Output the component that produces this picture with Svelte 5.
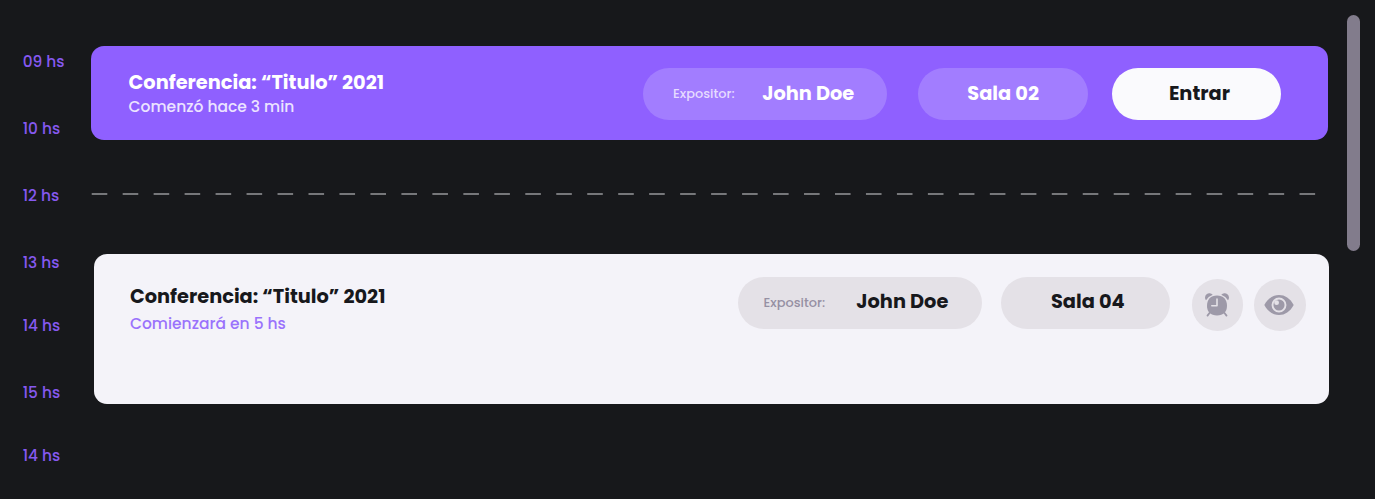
<script>
  const hours = [
    { label: '09 hs', gap: 47 },
    { label: '10 hs', gap: 47 },
    { label: '12 hs', gap: 47 },
    { label: '13 hs', gap: 43 },
    { label: '14 hs', gap: 47 },
    { label: '15 hs', gap: 43 },
    { label: '14 hs', gap: 0 }
  ];
</script>

<main class="agenda">
  <ul class="hours">
    {#each hours as hour, i (i)}
      <li style:margin-bottom="{hour.gap}px">{hour.label}</li>
    {/each}
  </ul>

  <section class="timeline">
    <article class="card live">
      <div class="info">
        <h2>Conferencia: “Titulo” 2021</h2>
        <p>Comenzó hace 3 min</p>
      </div>
      <div class="pill speaker"><small>Expositor:</small><b>John Doe</b></div>
      <div class="pill room"><b>Sala 02</b></div>
      <button class="pill enter"><b>Entrar</b></button>
    </article>

    <svg class="divider" width="1236" height="4" aria-hidden="true">
      <line x1="0.700" y1="2" x2="1226" y2="2" stroke="#96969a" stroke-width="1.6" stroke-dasharray="15.6 15.37" />
    </svg>

    <article class="card upcoming">
      <div class="info">
        <h2>Conferencia: “Titulo” 2021</h2>
        <p>Comienzará en 5 hs</p>
      </div>
      <div class="pill speaker"><small>Expositor:</small><b>John Doe</b></div>
      <div class="pill room"><b>Sala 04</b></div>
      <button class="round alarm" aria-label="Alarma">
        <svg width="24" height="24" viewBox="0 0 24 24">
          <g fill="#9d99a8">
            <path d="M1 7.300A3.700 3.700 0 1 1 7.700 1.800Q3.400 3.400 1 7.300Z" />
            <path d="M23 7.300A3.700 3.700 0 1 0 16.300 1.800Q20.600 3.400 23 7.300Z" />
            <path d="M12 2.500C18.300 2.500 22 6.300 22 12.700C22 19 18.300 22.400 12 22.400S2 19 2 12.700C2 6.300 5.700 2.500 12 2.500Z" />
          </g>
          <path d="M4.500 20L2.500 22.600M19.500 20L21.500 22.600" stroke="#9d99a8" stroke-width="1.800" stroke-linecap="round" />
          <path d="M12 6V12.800H6.800" fill="none" stroke="#e4e1e7" stroke-width="1.600" stroke-linecap="round" stroke-linejoin="round" />
        </svg>
      </button>
      <button class="round eye" aria-label="Ver">
        <svg width="30" height="22" viewBox="0 0 30 22">
          <path d="M0.300 11C4 4.300 9 1 15 1S26 4.300 29.700 11C26 17.700 21 21 15 21S4 17.700 0.300 11Z" fill="#9d99a8" />
          <circle cx="15" cy="11" r="6.500" fill="#9d99a8" stroke="#e4e1e7" stroke-width="1.900" />
          <circle cx="12.600" cy="8.700" r="2.400" fill="#e4e1e7" />
        </svg>
      </button>
    </article>
  </section>

  <div class="scroll"></div>
</main>

<style>
  :global(body) { background: #17181b; }
  .agenda {
    display: flex;
    box-sizing: border-box;
    width: 1375px;
    height: 499px;
    overflow: hidden;
    background: #17181b;
    font-family: Poppins, Inter, sans-serif;
  }
  .hours {
    box-sizing: border-box;
    flex: none;
    width: 91.300px;
    margin: 0;
    padding: 52.400px 0 0 22.700px;
    list-style: none;
    color: #8659f0;
    font-size: 15.400px;
    font-weight: 500;
    line-height: 20px;
  }
  .hours li { height: 20px; white-space: nowrap; }
  .timeline { box-sizing: border-box; width: 1238px; padding-top: 46.400px; flex: none; }
  .card {
    display: flex;
    align-items: flex-start;
    box-sizing: border-box;
    border-radius: 13px;
  }
  .live { width: 1236.300px; height: 94px; padding: 22px 0 0 37.300px; background: #8f60ff; color: #fff; }
  .upcoming {
    width: 1235.300px;
    height: 150px;
    margin-left: 2.300px;
    padding: 23.400px 0 0 36.400px;
    background: #f4f3f9;
    color: #17181c;
  }
  .divider { display: block; margin: 51.500px 0 58.100px; }
  .info { flex: none; white-space: nowrap; }
  .live .info { width: 514.900px; padding-top: 2.600px; }
  .upcoming .info { width: 607.900px; padding-top: 7.600px; }
  h2 { margin: 0; font-size: 19.350px; line-height: 24px; font-weight: 700; }
  p { margin: 0; font-size: 15.500px; font-weight: 500; line-height: 24px; }
  .live p { color: #ece4ff; }
  .upcoming p { margin-top: 3px; color: #9a72fc; }
  .pill {
    display: flex;
    align-items: center;
    flex: none;
    box-sizing: border-box;
    width: 169.300px;
    height: 51.700px;
    padding: 0;
    border: 0;
    border-radius: 26px;
    font-family: inherit;
    justify-content: center;
    white-space: nowrap;
  }
  .pill b { font-size: 19.350px; font-weight: 700; line-height: 24px; }
  .pill small { font-size: 12.900px; font-weight: 500; line-height: 20px; }
  .speaker { width: 244px; justify-content: flex-start; padding-left: 29.500px; }
  .speaker small { width: 89.300px; }
  .live .pill { background: #a27dff; }
  .live small { color: #e6dbff; }
  .live .room { margin-left: 31px; }
  .live .pill.enter { margin-left: 24px; padding-left: 6px; background: #fafafd; color: #17181c; }
  .upcoming .pill { background: #e4e1e7; }
  .upcoming .speaker { padding-left: 25.700px; }
  .upcoming .speaker small { width: 92.800px; color: #9690a3; }
  .upcoming .room { margin-left: 19.300px; padding-left: 4px; }
  .upcoming .pill b { padding-bottom: 2.200px; }
  .round {
    display: flex;
    align-items: center;
    justify-content: center;
    width: 51.700px;
    height: 51.700px;
    flex: none;
    padding: 0;
    border: 0;
    border-radius: 50%;
    background: #e4e1e7;
  }
  .alarm { margin: 1.500px 0 0 21.200px; }
  .alarm svg { margin-right: 1px; }
  .eye { margin: 2.100px 0 0 10.600px; }
  .eye svg { margin: 0 1.600px 1.600px 0; }
  .scroll {
    flex: none;
    width: 13px;
    height: 235.500px;
    margin: 15px 0 0 17.500px;
    border-radius: 7px;
    background: #827c8c;
  }
</style>
